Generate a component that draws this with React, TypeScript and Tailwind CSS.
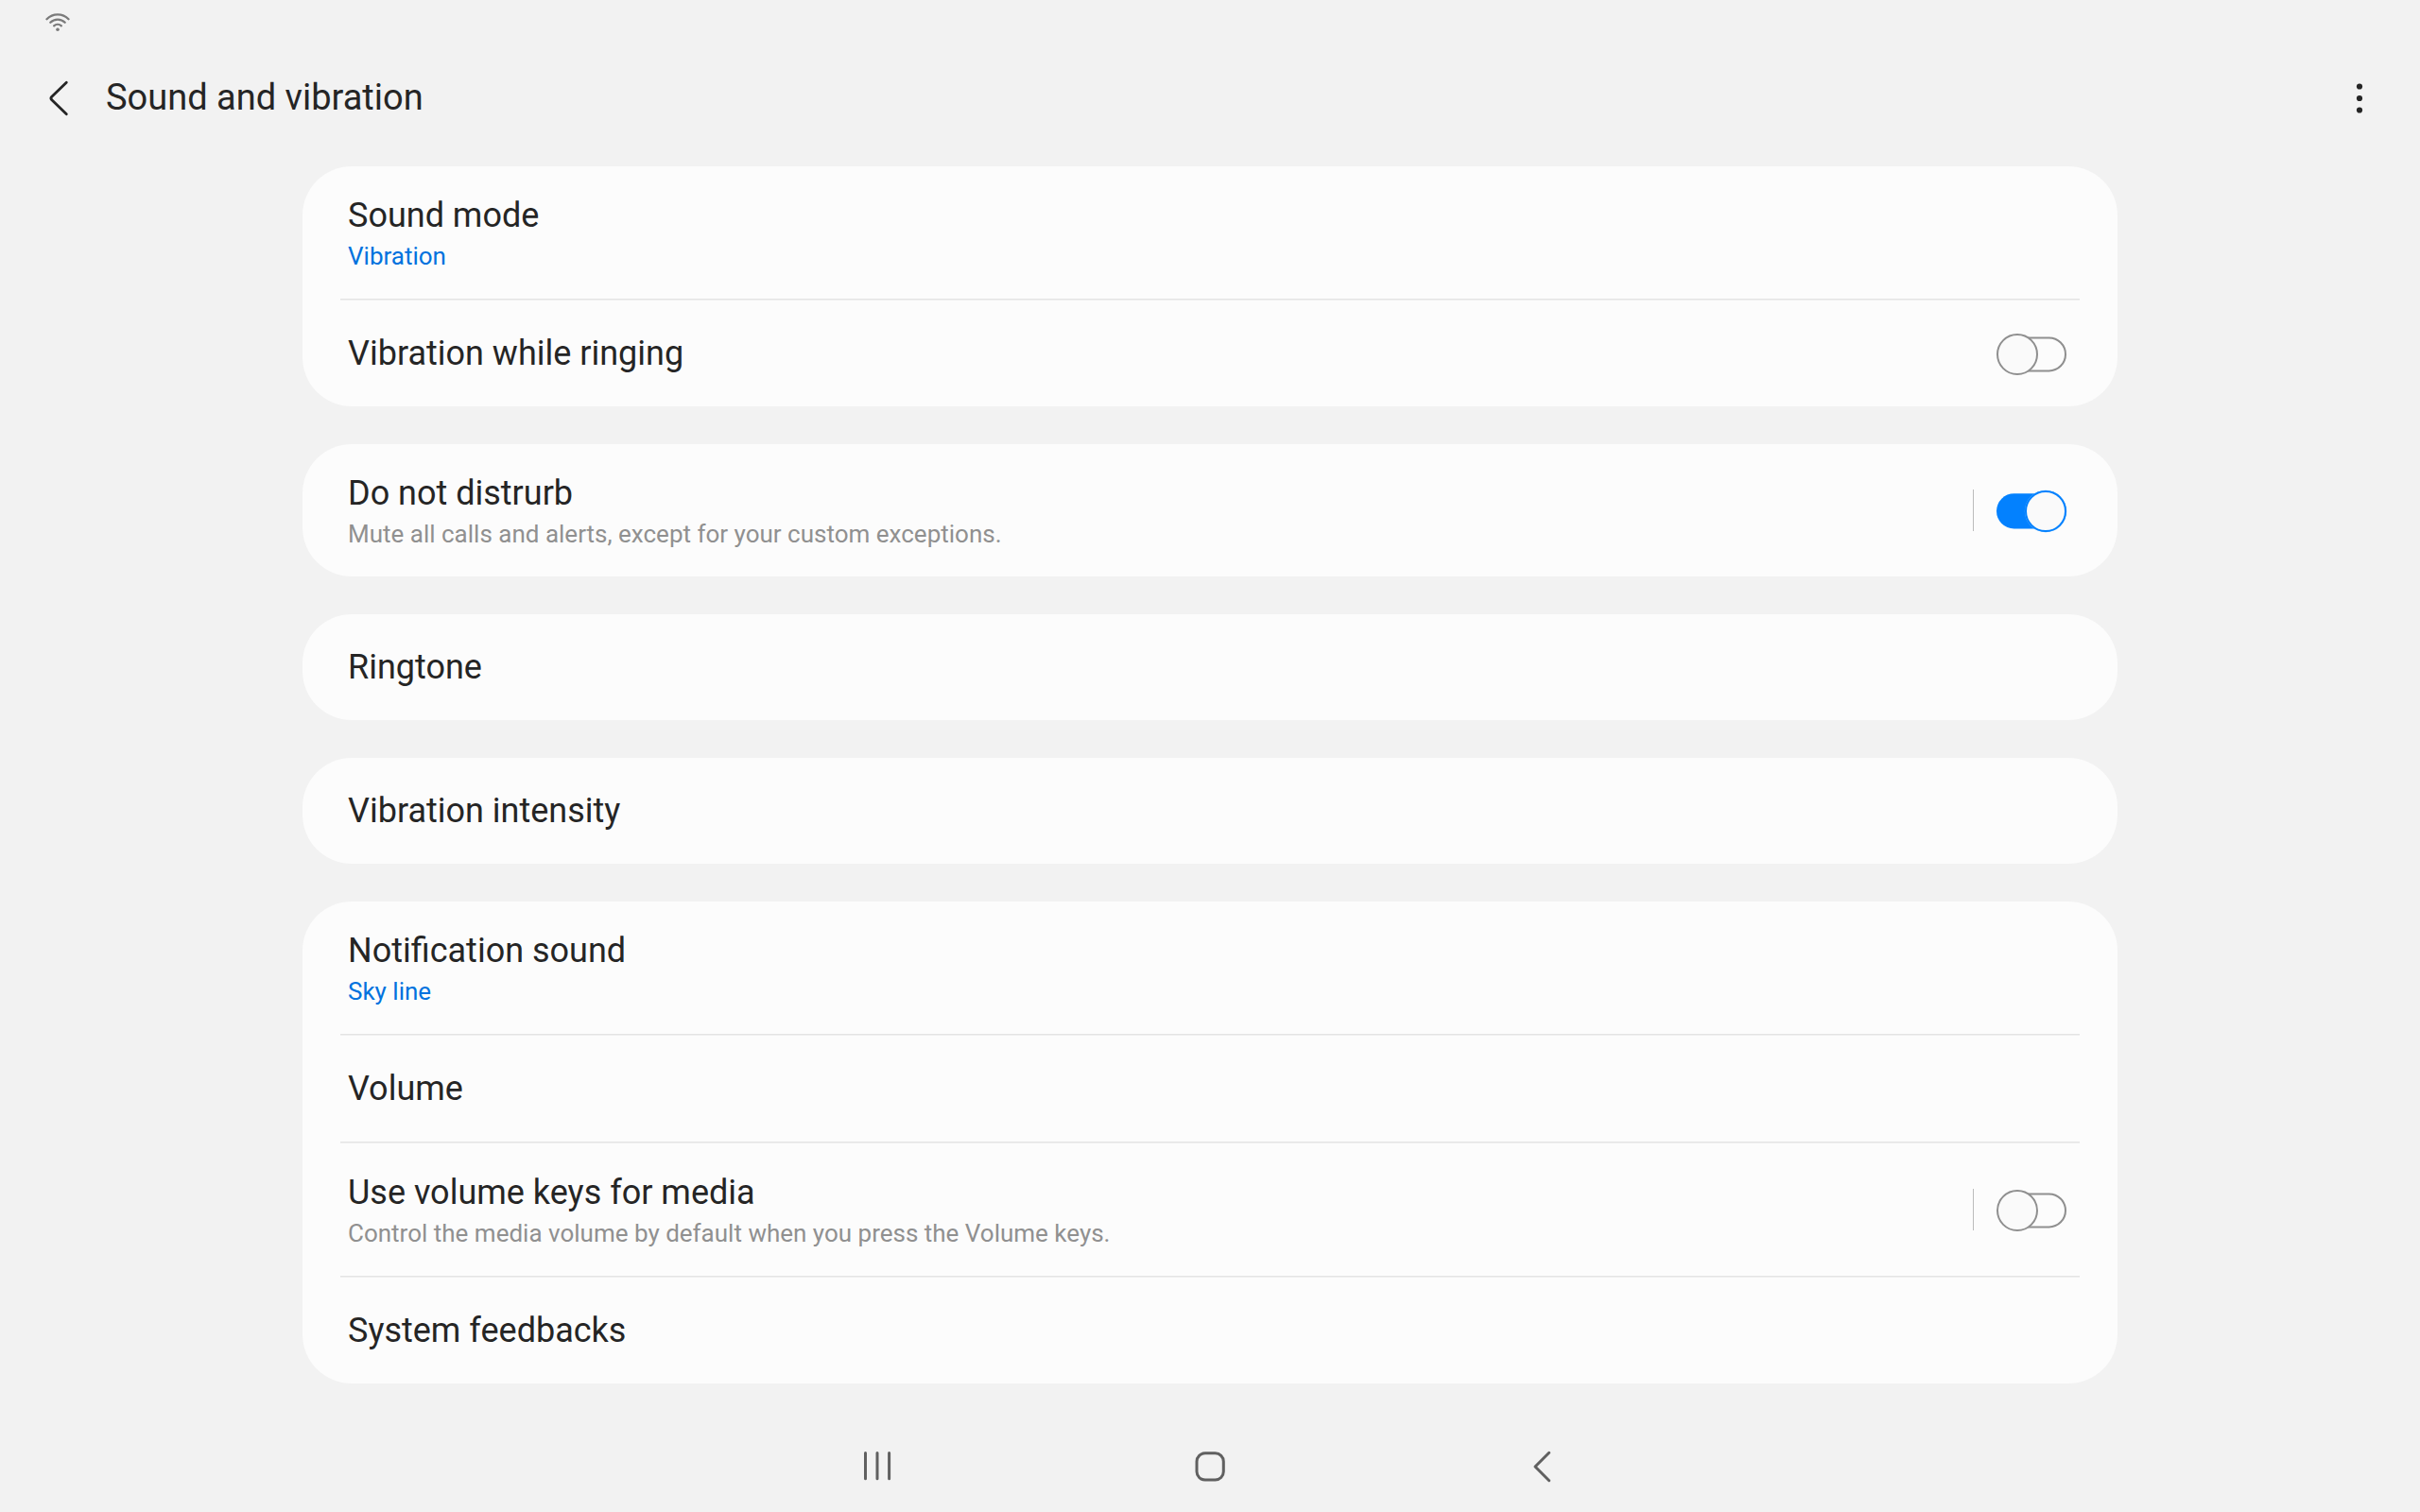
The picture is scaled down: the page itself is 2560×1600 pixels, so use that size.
import type { ReactNode } from "react";

function Toggle({ on = false }: { on?: boolean }) {
  return (
    <svg
      className="mt-0.5 h-[46px] w-[76px] shrink-0"
      viewBox="0 0 76 46"
      fill="none"
      role="switch"
      aria-checked={on}
    >
      {on ? (
        <>
          <rect x="1" y="4.2" width="73" height="37.3" rx="18.6" fill="#0381fe" />
          <circle cx="53" cy="23" r="22.2" fill="#5fb0fe" />
          <circle cx="53" cy="23" r="21" fill="#fafafa" stroke="#0381fe" strokeWidth="2" />
        </>
      ) : (
        <>
          <rect x="3" y="5.4" width="71" height="35" rx="17.5" stroke="#8f8f8f" strokeWidth="2" />
          <circle cx="23" cy="23" r="21" fill="#fafafa" stroke="#8f8f8f" strokeWidth="2" />
        </>
      )}
    </svg>
  );
}

type RowProps = {
  title: string;
  value?: string;
  description?: string;
  toggle?: "on" | "off";
  separated?: boolean;
};

function Row({ title, value, description, toggle, separated }: RowProps) {
  const tall = Boolean(value || description);
  return (
    <div className={`flex items-center pr-[53px] pl-12 ${tall ? "h-[140px]" : "h-28"}`}>
      <div className={`flex flex-1 flex-col ${tall ? "pt-0.5" : ""}`}>
        <span className="text-[36px] leading-[48px] text-[#252525]">{title}</span>
        {value && <span className="text-[26px] leading-[38px] text-[#0072de]">{value}</span>}
        {description && (
          <span className="text-[26px] leading-[38px] text-[#909090]">{description}</span>
        )}
      </div>
      {separated && <div className="mr-[23px] h-11 w-px bg-[#bcbcbc]" />}
      {toggle && <Toggle on={toggle === "on"} />}
    </div>
  );
}

function Divider() {
  return <div className="mx-10 h-0.5 border-b border-[#efefef] bg-[#e4e4e4]" />;
}

function Card({ children }: { children: ReactNode }) {
  return <section className="rounded-[52px] bg-[#fcfcfc]">{children}</section>;
}

export default function App() {
  return (
    <div className="flex h-[1600px] w-[2560px] flex-col overflow-hidden bg-[#f2f2f2] font-['Roboto',sans-serif]">
      <div className="h-12 pt-3 pl-12">
        <svg className="h-6 w-7" viewBox="48 12 28 24" fill="none" stroke="#7a7a7a" strokeWidth="2.3" strokeLinecap="round">
          <path d="M49.5 20.2A16 16 0 0 1 72.5 20.2" />
          <path d="M53.3 23.8A10.9 10.9 0 0 1 68.7 23.8" />
          <path d="M57.1 27.3A6 6 0 0 1 64.9 27.3" />
          <circle cx="61" cy="31.3" r="1.8" fill="#7a7a7a" stroke="none" />
        </svg>
      </div>

      <header className="flex h-28 items-center pr-12 pl-12">
        <svg className="h-10 w-7" viewBox="48 84 28 40" fill="none" stroke="#252525" strokeWidth="2.8" strokeLinecap="round">
          <path d="M70.3 87.2L54.6 102.4Q53.2 104 54.6 105.6L70.3 120.8" />
        </svg>
        <h1 className="ml-9 flex-1 pb-0.5 text-[38px] leading-[50px] text-[#252525]">Sound and vibration</h1>
        <svg className="h-10 w-8" viewBox="0 0 32 40" fill="#252525">
          <circle cx="16" cy="7.5" r="3.1" />
          <circle cx="16" cy="20" r="3.1" />
          <circle cx="16" cy="32.5" r="3.1" />
        </svg>
      </header>

      <main className="mx-auto mt-4 flex w-[1920px] flex-1 flex-col gap-10">
        <Card>
          <Row title="Sound mode" value="Vibration" />
          <Divider />
          <Row title="Vibration while ringing" toggle="off" />
        </Card>
        <Card>
          <Row
            title="Do not distrurb"
            description="Mute all calls and alerts, except for your custom exceptions."
            toggle="on"
            separated
          />
        </Card>
        <Card>
          <Row title="Ringtone" />
        </Card>
        <Card>
          <Row title="Vibration intensity" />
        </Card>
        <Card>
          <Row title="Notification sound" value="Sky line" />
          <Divider />
          <Row title="Volume" />
          <Divider />
          <Row
            title="Use volume keys for media"
            description="Control the media volume by default when you press the Volume keys."
            toggle="off"
            separated
          />
          <Divider />
          <Row title="System feedbacks" />
        </Card>
      </main>

      <nav className="flex h-24 items-center justify-center gap-[312px]">
        <svg className="h-10 w-10" viewBox="908 1532 40 40" stroke="#606060" strokeWidth="3" strokeLinecap="round">
          <path d="M915.5 1537.5V1564.7M928 1537.5V1564.7M940.6 1537.5V1564.7" />
        </svg>
        <svg className="h-10 w-10" viewBox="1260 1532 40 40" fill="none" stroke="#606060" strokeWidth="3">
          <rect x="1266" y="1537.8" width="28.3" height="28.3" rx="8.8" />
        </svg>
        <svg className="h-10 w-10" viewBox="1612 1532 40 40" fill="none" stroke="#606060" strokeWidth="3" strokeLinecap="round" strokeLinejoin="round">
          <path d="M1638.7 1537.3L1624 1552L1638.7 1566.7" />
        </svg>
      </nav>
    </div>
  );
}
